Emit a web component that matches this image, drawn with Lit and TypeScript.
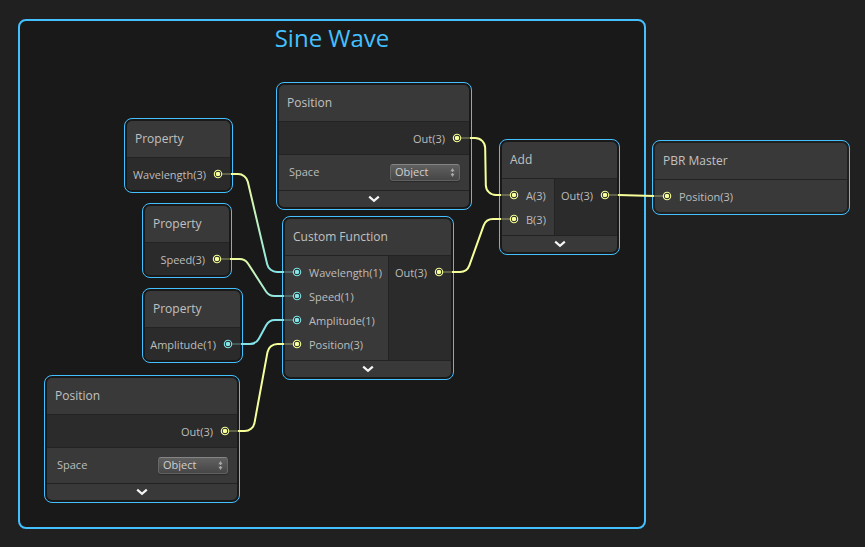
import { LitElement, html, svg, css, nothing } from "lit";
import { customElement, property } from "lit/decorators.js";
import { classMap } from "lit/directives/class-map.js";
import { styleMap } from "lit/directives/style-map.js";

type Kind = "vector" | "scalar";

interface Port {
  name: string;
  kind: Kind;
}

interface GraphNode {
  id: string;
  title: string;
  x: number;
  y: number;
  width: number;
  inputs?: Port[];
  outputs?: Port[];
  space?: boolean;
  collapsible?: boolean;
}

interface Wire {
  from: [number, number];
  to: [number, number];
  fromKind: Kind;
  toKind: Kind;
}

const COLORS: Record<Kind, string> = { vector: "#f6ff9a", scalar: "#84e4e7" };

const NODES: GraphNode[] = [
  { id: "wavelength", title: "Property", x: 124, y: 118, width: 109, outputs: [{ name: "Wavelength(3)", kind: "vector" }] },
  { id: "speed", title: "Property", x: 142, y: 203, width: 90, outputs: [{ name: "Speed(3)", kind: "vector" }] },
  { id: "amplitude", title: "Property", x: 142, y: 288, width: 101, outputs: [{ name: "Amplitude(1)", kind: "scalar" }] },
  { id: "position-a", title: "Position", x: 276, y: 82, width: 196, outputs: [{ name: "Out(3)", kind: "vector" }], space: true, collapsible: true },
  { id: "position-b", title: "Position", x: 44, y: 375, width: 196, outputs: [{ name: "Out(3)", kind: "vector" }], space: true, collapsible: true },
  {
    id: "custom",
    title: "Custom Function",
    x: 282,
    y: 216,
    width: 172,
    inputs: [
      { name: "Wavelength(1)", kind: "scalar" },
      { name: "Speed(1)", kind: "scalar" },
      { name: "Amplitude(1)", kind: "scalar" },
      { name: "Position(3)", kind: "vector" },
    ],
    outputs: [{ name: "Out(3)", kind: "vector" }],
    collapsible: true,
  },
  {
    id: "add",
    title: "Add",
    x: 499,
    y: 139,
    width: 121,
    inputs: [
      { name: "A(3)", kind: "vector" },
      { name: "B(3)", kind: "vector" },
    ],
    outputs: [{ name: "Out(3)", kind: "vector" }],
    collapsible: true,
  },
  { id: "master", title: "PBR Master", x: 652, y: 140, width: 198, inputs: [{ name: "Position(3)", kind: "vector" }] },
];

// Endpoints are the centres of the two connected ports.
const WIRES: Wire[] = [
  { from: [218, 174], to: [297, 272], fromKind: "vector", toKind: "scalar" },
  { from: [217, 259], to: [297, 296], fromKind: "vector", toKind: "scalar" },
  { from: [228, 344], to: [297, 320], fromKind: "scalar", toKind: "scalar" },
  { from: [225, 431], to: [297, 344], fromKind: "vector", toKind: "vector" },
  { from: [457, 138], to: [514, 195], fromKind: "vector", toKind: "vector" },
  { from: [439, 272], to: [514, 219], fromKind: "vector", toKind: "vector" },
  { from: [605, 195], to: [667, 196], fromKind: "vector", toKind: "vector" },
];

const STUB = 13;
const KNEE = 28;
const RADIUS = 10;

// Two straight stubs joined by a diagonal, with both corners rounded by an arc.
function wirePath({ from: [x1, y1], to: [x2, y2] }: Wire): string {
  const start = `M${x1 + STUB} ${y1}`;
  const end = `L${x2 - STUB} ${y2}`;
  if (Math.abs(y2 - y1) < 4) return `${start}${end}`;
  const ax = x1 + KNEE;
  const bx = x2 - KNEE;
  const angle = Math.atan2(y2 - y1, bx - ax);
  const cut = RADIUS * Math.tan(Math.abs(angle) / 2);
  const ux = Math.cos(angle) * cut;
  const uy = Math.sin(angle) * cut;
  const sweep = angle > 0 ? 1 : 0;
  return (
    `${start}L${ax - cut} ${y1}A${RADIUS} ${RADIUS} 0 0 ${sweep} ${ax + ux} ${y1 + uy}` +
    `L${bx - ux} ${y2 - uy}A${RADIUS} ${RADIUS} 0 0 ${1 - sweep} ${bx + cut} ${y2}${end}`
  );
}

@customElement("graph-node")
class GraphNodeElement extends LitElement {
  @property({ attribute: false }) node!: GraphNode;

  static styles = css`
    :host {
      display: block;
      box-sizing: border-box;
      padding: 2px;
      border: 1px solid #44c0ff;
      border-radius: 8px;
      color: #bdbdbd;
      font-size: 11px;
      line-height: 16px;
    }
    .card {
      overflow: hidden;
      border-radius: 5px;
      background: #393939;
    }
    .title {
      margin: 0;
      padding: 10px 8px;
      font-size: 12px;
      line-height: 16px;
      font-weight: 400;
      color: #c1c1c1;
      white-space: nowrap;
    }
    .body {
      display: flex;
      border-top: 1px solid #232323;
    }
    .ports {
      flex: 1;
      min-width: 0;
      margin: 0;
      padding: 4px 0 4px 8px;
      list-style: none;
    }
    .outputs {
      padding: 4px 8px 4px 0;
      background: #2b2b2b;
    }
    .inputs + .outputs {
      flex: none;
      box-sizing: border-box;
      width: 63px;
      border-left: 1px solid #232323;
    }
    .port {
      display: flex;
      align-items: center;
      gap: 8px;
      height: 24px;
      white-space: nowrap;
    }
    .outputs .port {
      justify-content: flex-end;
    }
    .label {
      padding-top: 2px;
    }
    .socket {
      flex: none;
      width: 8px;
      height: 8px;
      overflow: visible;
      color: #f6ff9a;
    }
    .scalar {
      color: #84e4e7;
    }
    .setting {
      display: flex;
      align-items: center;
      justify-content: space-between;
      height: 35px;
      padding: 0 9px 0 10px;
      border-top: 1px solid #232323;
    }
    .caption {
      padding-bottom: 2px;
    }
    .picker {
      position: relative;
      display: flex;
    }
    .select {
      appearance: none;
      width: 70px;
      height: 17px;
      margin: 0;
      padding: 0 16px 2px 4px;
      border: 1px solid #6b6b6b;
      border-color: #858585 #686868 #606060;
      border-radius: 3px;
      background: linear-gradient(#606060, #464646);
      box-shadow: 0 1px 1px #2a2a2a;
      color: #cfcfcf;
      font: inherit;
      line-height: 13px;
    }
    .arrows {
      position: absolute;
      top: 4px;
      right: 5px;
      width: 5px;
      height: 9px;
      pointer-events: none;
    }
    .collapse {
      display: flex;
      align-items: center;
      justify-content: center;
      box-sizing: border-box;
      width: 100%;
      height: 17px;
      padding: 0;
      border: 0;
      border-top: 1px solid #232323;
      background: none;
    }
    .chevron {
      width: 12px;
      height: 8px;
    }
  `;

  private socket(kind: Kind) {
    return html`<svg class=${classMap({ socket: true, scalar: kind === "scalar" })} viewBox="0 0 8 8" aria-hidden="true">
      <circle cx="4" cy="4" r="3.7" fill="#212121" stroke="currentColor" stroke-width="1.1" />
      <circle cx="4" cy="4" r="2.3" fill="currentColor" />
    </svg>`;
  }

  render() {
    const { id, title, inputs, outputs, space, collapsible } = this.node;
    return html`
      <article class="card">
        <h2 class="title">${title}</h2>
        <div class="body">
          ${inputs
            ? html`<ul class="ports inputs">
                ${inputs.map((p) => html`<li class="port">${this.socket(p.kind)}<span class="label">${p.name}</span></li>`)}
              </ul>`
            : nothing}
          ${outputs
            ? html`<ul class="ports outputs">
                ${outputs.map((p) => html`<li class="port"><span class="label">${p.name}</span>${this.socket(p.kind)}</li>`)}
              </ul>`
            : nothing}
        </div>
        ${space
          ? html`<div class="setting">
              <label class="caption" for="space-${id}">Space</label>
              <span class="picker">
                <select class="select" id="space-${id}">
                  <option>Object</option>
                </select>
                <svg class="arrows" viewBox="0 0 5 9" aria-hidden="true">
                  <path d="M2.5 0L4.6 3.2H3V4H2V3.2H.4ZM2.5 9L4.6 5.8H3V5H2V5.8H.4Z" fill="#a6a6a6" />
                </svg>
              </span>
            </div>`
          : nothing}
        ${collapsible
          ? html`<button class="collapse" type="button" aria-label="Collapse ${title}">
              <svg class="chevron" viewBox="0 0 12 8" aria-hidden="true">
                <path d="M1.2 1.6L6 5.8L10.8 1.6" fill="none" stroke="#f4f4f4" stroke-width="2.2" />
              </svg>
            </button>`
          : nothing}
      </article>
    `;
  }
}

@customElement("app-root")
class AppRoot extends LitElement {
  static styles = css`
    :host {
      display: block;
      position: relative;
      min-height: 100vh;
      overflow: hidden;
      background: #202020;
      font-family: "Open Sans", "Noto Sans", sans-serif;
    }
    .group {
      position: absolute;
      box-sizing: border-box;
      border: 2px solid #44c0ff;
      border-radius: 8px;
      background: #191919;
    }
    .heading {
      margin: 0;
      font-size: 24px;
      line-height: 34px;
      font-weight: 400;
      text-align: center;
      color: #44c0ff;
    }
    .node {
      position: absolute;
    }
    .wires {
      position: absolute;
      inset: 0;
      width: 100%;
      height: 100%;
      pointer-events: none;
    }
    .wire {
      fill: none;
      stroke-width: 2;
    }
    .stub {
      stroke-width: 2;
      opacity: 0.25;
    }
  `;

  private wire(w: Wire, i: number) {
    const [x1, y1] = w.from;
    const [x2, y2] = w.to;
    return svg`
      <linearGradient id="tint-${i}" gradientUnits="userSpaceOnUse" x1=${x1 + STUB} y1=${y1} x2=${x2 - STUB} y2=${y2}>
        <stop offset="0" stop-color=${COLORS[w.fromKind]} />
        <stop offset="1" stop-color=${COLORS[w.toKind]} />
      </linearGradient>
      <path class="wire" d=${wirePath(w)} stroke="url(#tint-${i})" />
      <path class="stub" d="M${x1 + 4} ${y1}H${x1 + STUB}" stroke=${COLORS[w.fromKind]} />
      <path class="stub" d="M${x2 - STUB} ${y2}H${x2 - 4}" stroke=${COLORS[w.toKind]} />
    `;
  }

  private box(x: number, y: number, width: number, height?: number) {
    return styleMap({
      left: `${x}px`,
      top: `${y}px`,
      width: `${width}px`,
      height: height ? `${height}px` : undefined,
    });
  }

  render() {
    return html`
      <section class="group" style=${this.box(18, 19, 628, 510)}>
        <h1 class="heading">Sine Wave</h1>
      </section>
      ${NODES.map((n) => html`<graph-node class="node" style=${this.box(n.x, n.y, n.width)} .node=${n}></graph-node>`)}
      <svg class="wires" aria-hidden="true">${WIRES.map((w, i) => this.wire(w, i))}</svg>
    `;
  }
}
